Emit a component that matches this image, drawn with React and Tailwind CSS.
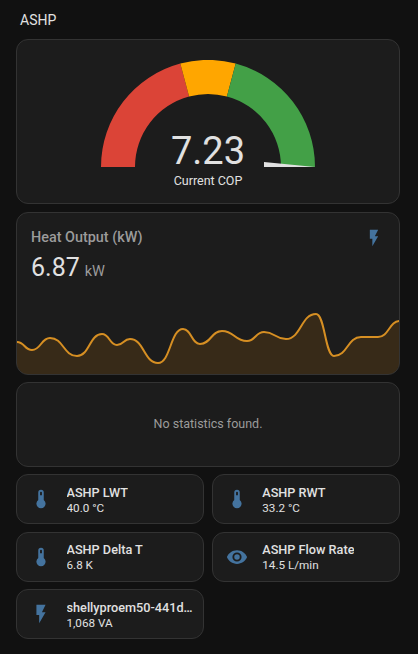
const thermometer = 'M15 13V5A3 3 0 0 0 9 5V13A5 5 0 1 0 15 13M12 4A1 1 0 0 1 13 5V8H11V5A1 1 0 0 1 12 4Z';
const flash = 'M7,2V13H10V22L17,10H13L17,2H7Z';
const eye = 'M12,9A3,3 0 0,0 9,12A3,3 0 0,0 12,15A3,3 0 0,0 15,12A3,3 0 0,0 12,9M12,17A5,5 0 0,1 7,12A5,5 0 0,1 12,7A5,5 0 0,1 17,12A5,5 0 0,1 12,17M12,4.5C7,4.5 2.73,7.61 1,12C2.73,16.39 7,19.5 12,19.5C17,19.5 21.27,16.39 23,12C21.27,7.61 17,4.5 12,4.5Z';

const tiles = [
  { name: 'ASHP LWT', state: '40.0 °C', icon: thermometer },
  { name: 'ASHP RWT', state: '33.2 °C', icon: thermometer },
  { name: 'ASHP Delta T', state: '6.8 K', icon: thermometer },
  { name: 'ASHP Flow Rate', state: '14.5 L/min', icon: eye },
  { name: 'shellyproem50-441d1a2b3c', state: '1,068 VA', icon: flash },
];

// traced from the history graph, card coordinates
const points = [
  [0, 86], [15, 94], [33, 82], [60, 100], [85, 78], [100, 89], [113, 83], [141, 107], [166, 73],
  [183, 88], [205, 75], [230, 85], [247, 76], [269, 83], [299, 58], [317, 100], [344, 81], [361, 81], [383, 65],
];

function smoothLine(pts) {
  let d = `M${pts[0][0]},${pts[0][1]}`;
  for (let i = 0; i < pts.length - 1; i++) {
    const [x1, y1] = pts[i];
    const [x2, y2] = pts[i + 1];
    const mid = (x1 + x2) / 2;
    d += `C${mid},${y1} ${mid},${y2} ${x2},${y2}`;
  }
  return d;
}

function Icon({ d, className }) {
  return (
    <svg viewBox="0 0 24 24" className={className} fill="currentColor">
      <path d={d} />
    </svg>
  );
}

function Card({ className, children }) {
  return <div className={`rounded-xl border border-[#333333] bg-[#1c1c1c] ${className}`}>{children}</div>;
}

function Gauge() {
  return (
    <Card className="relative flex h-[165px] justify-center pt-5">
      <svg width="216" height="108" viewBox="0 0 216 108">
        <path d="M1,107A107,107 0 0 1 80.3,3.6L89.1,36.5A73,73 0 0 0 35,107Z" fill="#db4437" />
        <path d="M80.3,3.6A107,107 0 0 1 135.7,3.6L126.9,36.5A73,73 0 0 0 89.1,36.5Z" fill="#ffa600" />
        <path d="M135.7,3.6A107,107 0 0 1 215,107L181,107A73,73 0 0 0 126.9,36.5Z" fill="#43a047" />
        <polygon points="164,102 164,107 215,107" fill="#e1e1e1" />
      </svg>
      <div className="absolute left-0 right-0 top-[87px] text-center text-[38px] leading-[48px] text-[#e1e1e1]">7.23</div>
      <div className="absolute left-0 right-0 top-[133px] text-center text-[12.5px] leading-4 text-[#e1e1e1]">Current COP</div>
    </Card>
  );
}

function HeatOutput() {
  const line = smoothLine(points);
  return (
    <Card className="h-[163px] overflow-hidden">
      <div className="flex items-start justify-between pl-[14px] pr-[15px] pt-[12px]">
        <div>
          <div className="text-[14.4px] font-medium leading-[26px] text-[#9b9b9b]">Heat Output (kW)</div>
          <div className="flex items-baseline">
            <span className="text-[25px] leading-[33px] text-[#e1e1e1]">6.87</span>
            <span className="ml-[5px] text-[14.5px] text-[#9b9b9b]">kW</span>
          </div>
        </div>
        <Icon d={flash} className="mt-[3px] h-5 w-5 text-[#44739e]" />
      </div>
      <svg width="382" height="118" viewBox="0 0 382 118" className="-mt-[28px] block">
        <path d={`${line}L383,118L0,118Z`} fill="#ff9800" fillOpacity="0.12" />
        <path d={line} fill="none" stroke="#d68f23" strokeWidth="2" />
      </svg>
    </Card>
  );
}

function Tile({ name, state, icon }) {
  return (
    <Card className="flex h-[50px] min-w-0 items-center">
      <Icon d={icon} className="ml-[13px] h-[22px] w-[22px] shrink-0 text-[#44739e]" />
      <div className="ml-[14.5px] min-w-0 pr-[10px]">
        <div className="truncate text-[12.7px] font-medium leading-[17px] text-[#e1e1e1]">{name}</div>
        <div className="truncate text-[11.7px] leading-[14px] text-[#e1e1e1]">{state}</div>
      </div>
    </Card>
  );
}

export default function App() {
  return (
    <div className="min-h-[654px] bg-[#111111] font-['Roboto',sans-serif]">
      <div className="ml-4 w-[384px]">
        <h1 className="pl-1 pt-[10px] pb-[9px] text-[14px] font-normal leading-5 text-[#e1e1e1]">ASHP</h1>
        <div className="flex flex-col gap-[7.5px]">
          <Gauge />
          <HeatOutput />
          <Card className="flex h-[84.5px] items-center justify-center">
            <span className="text-[12.5px] text-[#9b9b9b]">No statistics found.</span>
          </Card>
          <div className="grid grid-cols-2 gap-[7.5px]">
            {tiles.map((tile) => (
              <Tile key={tile.name} {...tile} />
            ))}
          </div>
        </div>
      </div>
    </div>
  );
}
